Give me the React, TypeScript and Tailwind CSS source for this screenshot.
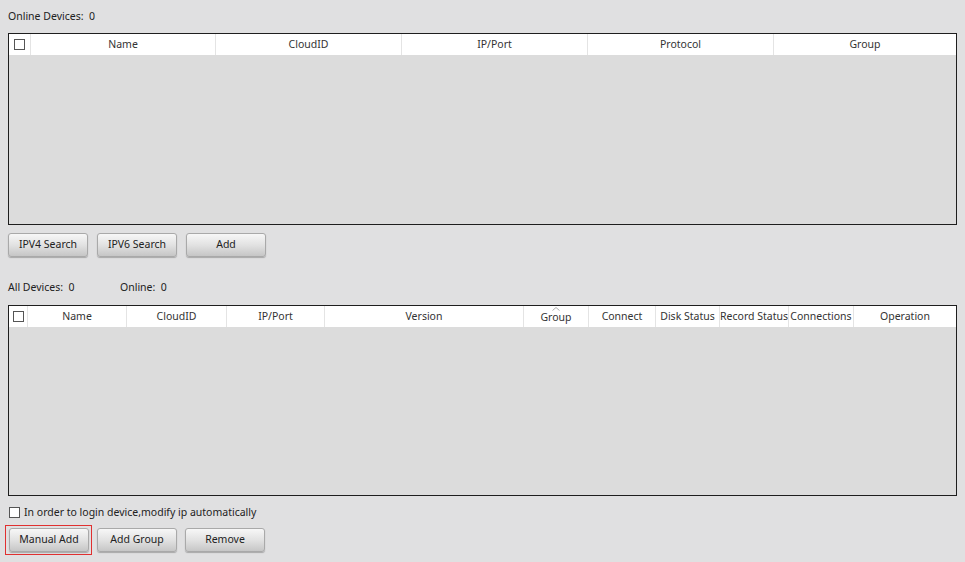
import React from "react";

const font = { fontFamily: '"Noto Sans", "Open Sans", sans-serif' };

function Check({ className = "" }: { className?: string }) {
  return <span className={`block h-[11px] w-[11px] border border-[#555] bg-white ${className}`} />;
}

function Btn({ label }: { label: string }) {
  return (
    <button className="h-[24px] w-[80px] rounded-[3px] border border-[#a9a9a9] bg-gradient-to-b from-[#f7f7f7] via-[#e2e2e2] to-[#c6c6c6] text-[10.5px] text-[#222] shadow-[0_1px_1px_rgba(0,0,0,0.25)]">
      {label}
    </button>
  );
}

type Col = { label: string; w: string };

function Table({ cols, checkW, h }: { cols: Col[]; checkW: string; h: string }) {
  return (
    <div className={`mx-2 flex flex-col border border-[#1e1e1e] bg-[#dcdcdc] ${h}`}>
      <div className="flex h-[21px] shrink-0 bg-white text-[10.5px] text-[#333]">
        <div className={`flex items-center justify-center ${checkW}`}>
          <Check />
        </div>
        {cols.map((c, i) => (
          <div
            key={c.label}
            className={`relative flex items-center justify-center overflow-hidden whitespace-nowrap border-l border-[#e4e4e4] ${c.w} ${i === cols.length - 1 ? "flex-1" : ""}`}
          >
            {c.label === "Group" && cols.length > 6 && (
              <svg className="absolute left-1/2 top-[1px] -translate-x-1/2" width="8" height="4" viewBox="0 0 8 4">
                <path d="M0.5 3.5 L4 0.5 L7.5 3.5" fill="none" stroke="#999" strokeWidth="0.8" />
              </svg>
            )}
            <span className={c.label === "Group" && cols.length > 6 ? "pt-[3px]" : ""}>{c.label}</span>
          </div>
        ))}
      </div>
      <div className="flex-1" />
    </div>
  );
}

export default function App() {
  const top: Col[] = [
    { label: "Name", w: "w-[185px]" },
    { label: "CloudID", w: "w-[186px]" },
    { label: "IP/Port", w: "w-[186px]" },
    { label: "Protocol", w: "w-[186px]" },
    { label: "Group", w: "w-[185px]" },
  ];
  const bottom: Col[] = [
    { label: "Name", w: "w-[99px]" },
    { label: "CloudID", w: "w-[100px]" },
    { label: "IP/Port", w: "w-[98px]" },
    { label: "Version", w: "w-[199px]" },
    { label: "Group", w: "w-[65px]" },
    { label: "Connect", w: "w-[67px]" },
    { label: "Disk Status", w: "w-[64px]" },
    { label: "Record Status", w: "w-[69px]" },
    { label: "Connections", w: "w-[65px]" },
    { label: "Operation", w: "w-[105px]" },
  ];
  return (
    <div style={font} className="relative h-[562px] w-[965px] overflow-hidden bg-[#e0e0e1] text-[10.5px] text-[#222]">
      <div className="h-[33px] pl-2 pt-[9px]">Online Devices:&nbsp; 0</div>
      <Table cols={top} checkW="w-[21px]" h="h-[192px]" />
      <div className="mt-[8px] flex gap-[9px] pl-2">
        <Btn label="IPV4 Search" />
        <Btn label="IPV6 Search" />
        <Btn label="Add" />
      </div>
      <div className="flex h-[48px] items-end pb-[9px] pl-2">
        <span className="w-[112px]">All Devices:&nbsp; 0</span>
        <span>Online:&nbsp; 0</span>
      </div>
      <Table cols={bottom} checkW="w-[18px]" h="h-[191px]" />
      <div className="mt-[9px] flex items-center gap-[4px] pl-[9px] leading-[14px]">
        <Check className="h-[10px] w-[10px]" />
        <span>In order to login device,modify ip automatically</span>
      </div>
      <div className="mt-[6px] flex items-center gap-[5px] pl-[5px]">
        <div className="border border-[#e03030] p-[2px] pl-[3px]">
          <Btn label="Manual Add" />
        </div>
        <div className="flex gap-[8px]">
          <Btn label="Add Group" />
          <Btn label="Remove" />
        </div>
      </div>
    </div>
  );
}
